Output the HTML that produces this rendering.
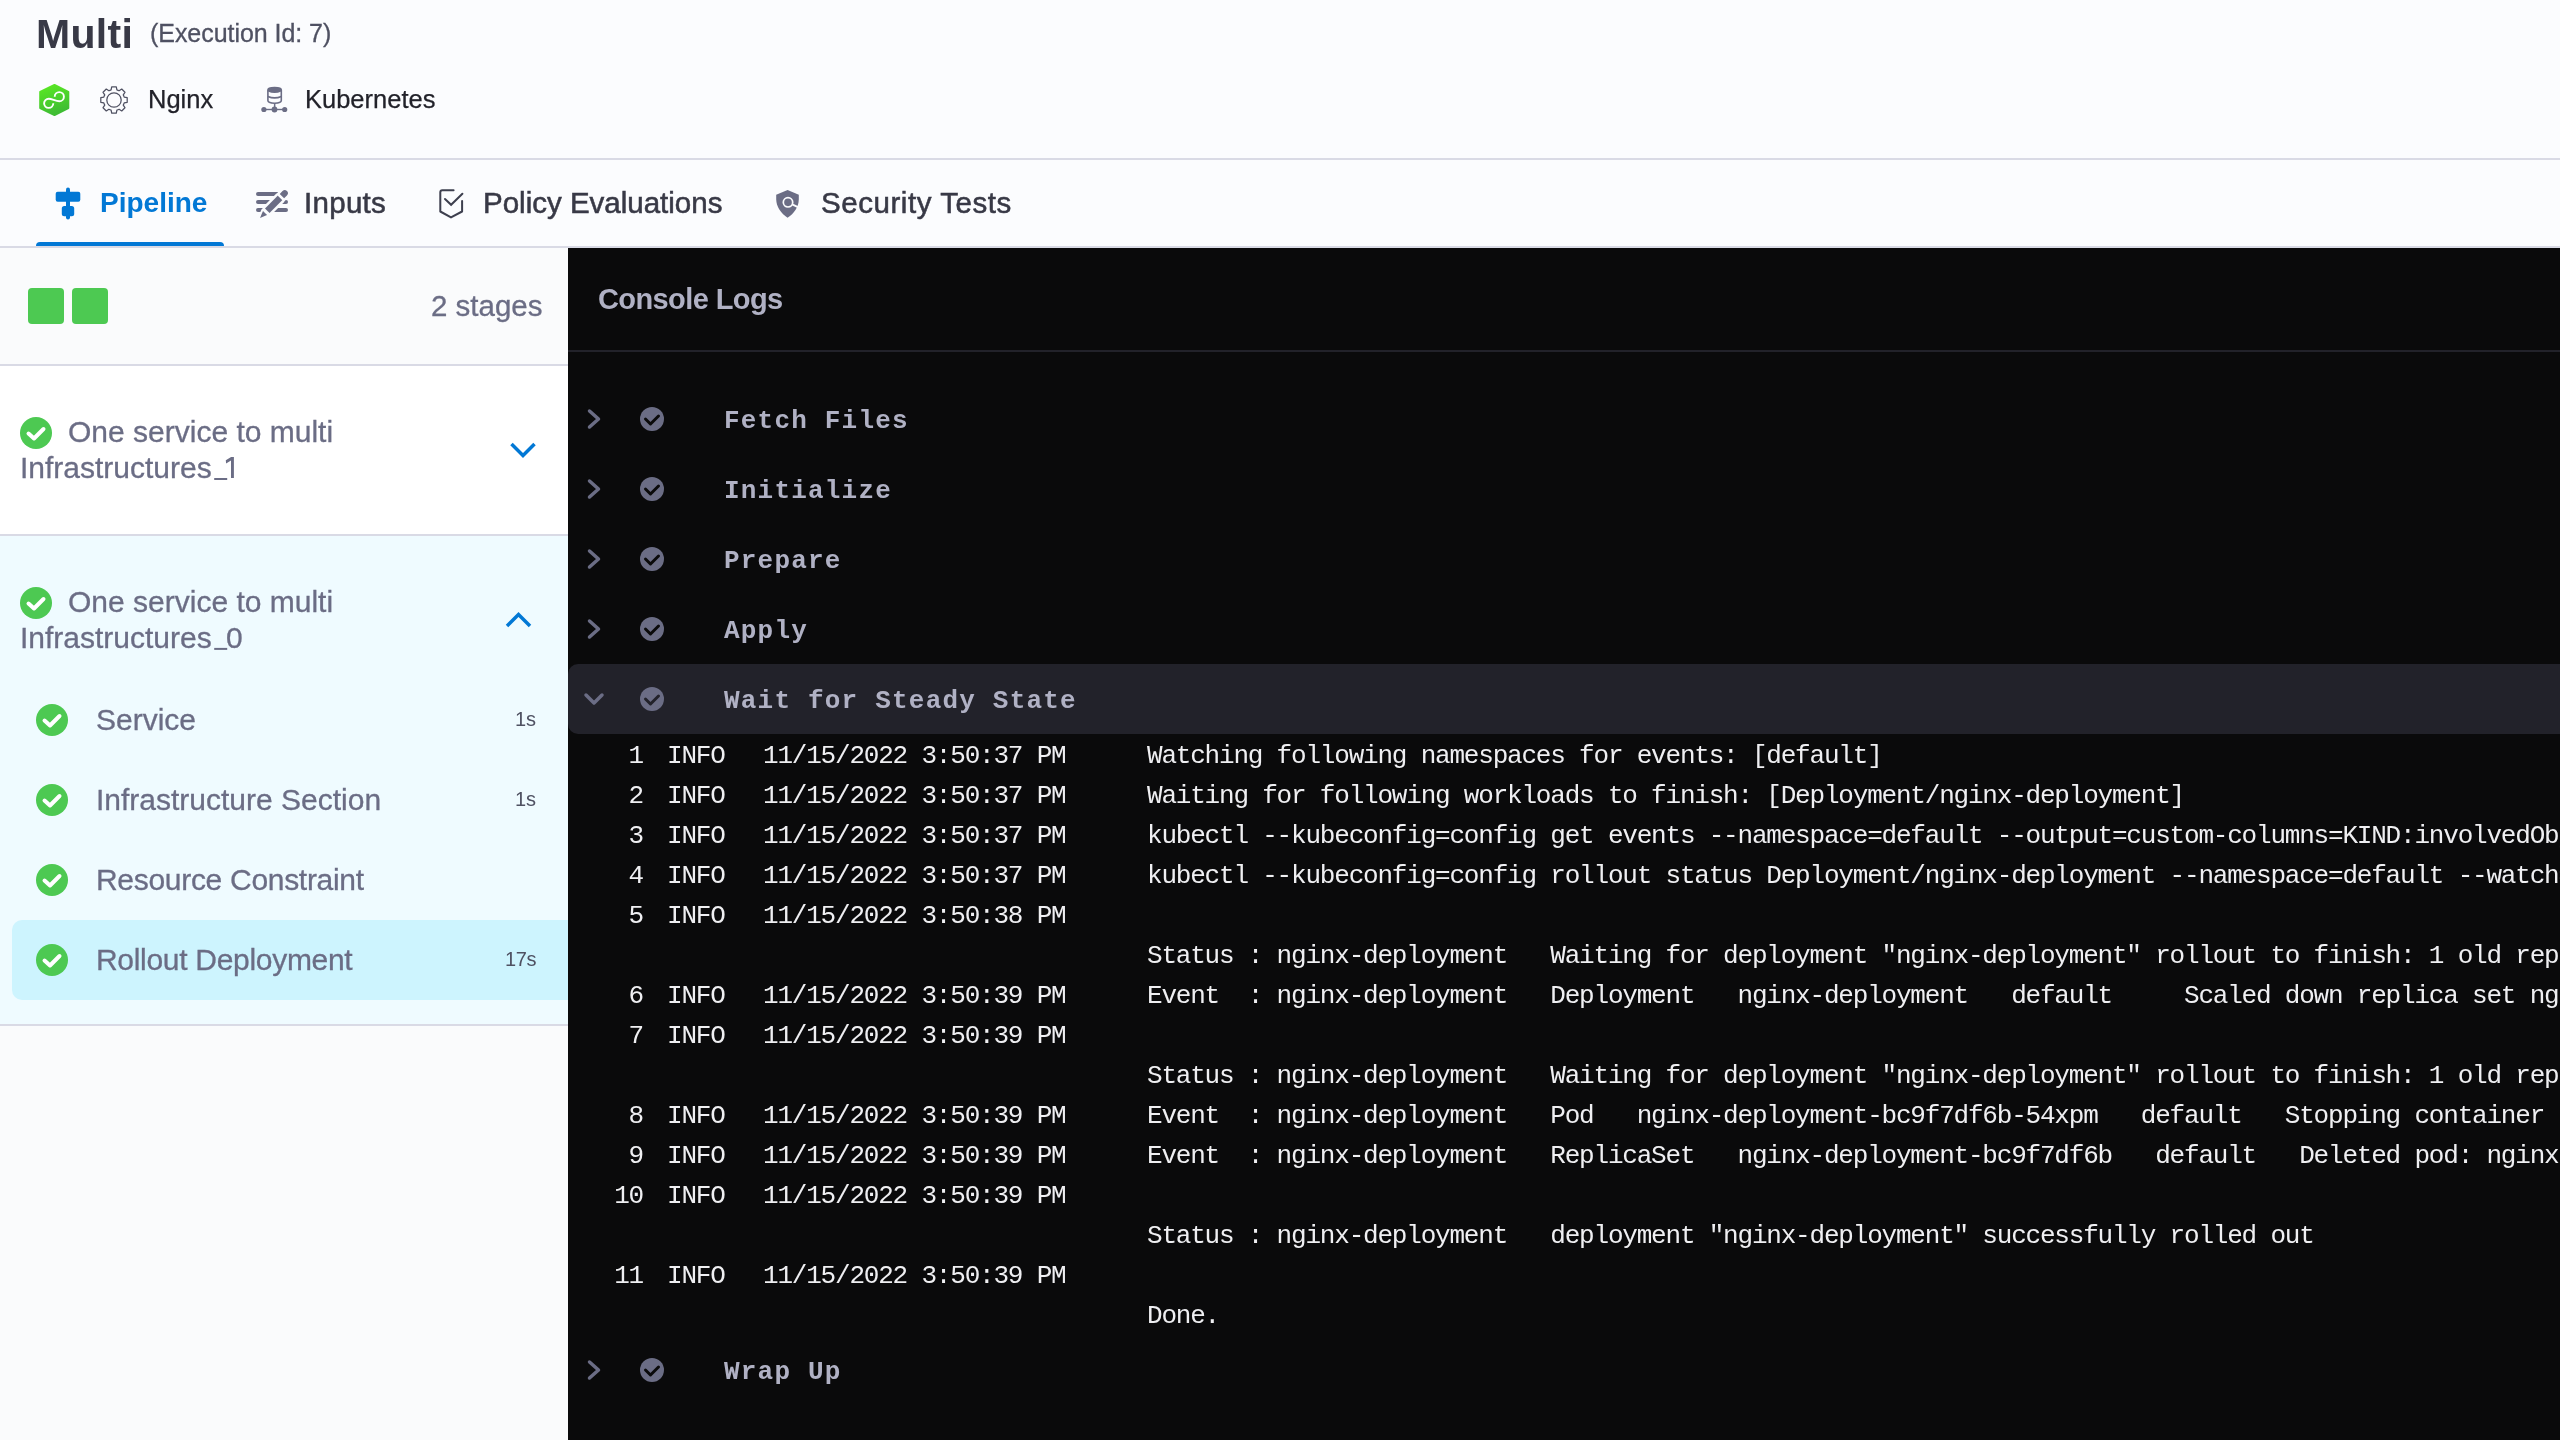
<!DOCTYPE html>
<html><head><meta charset="utf-8">
<style>
*{box-sizing:border-box;margin:0;padding:0}
html,body{width:2560px;height:1440px;overflow:hidden;background:#fafbfc;font-family:"Liberation Sans",sans-serif;-webkit-font-smoothing:antialiased}
.a{position:absolute;white-space:pre}
svg{position:absolute;overflow:visible}
#hdr{will-change:transform;position:absolute;left:0;top:0;width:2560px;height:158px;background:#fbfcfe}
#hline{position:absolute;left:0;top:158px;width:2560px;height:2px;background:#d9dae5}
#tabs{will-change:transform;position:absolute;left:0;top:160px;width:2560px;height:86px;background:#fbfcfe}
#tline{position:absolute;left:0;top:246px;width:2560px;height:2px;background:#d9dae5}
#left{will-change:transform;position:absolute;left:0;top:248px;width:568px;height:1192px;background:#fafbfc}
#console{will-change:transform;position:absolute;left:568px;top:248px;width:1992px;height:1192px;background:#0a0a0b;overflow:hidden}
.tab{font-size:29.5px;line-height:29.5px;color:#383946;-webkit-text-stroke:0.55px #383946}
.sg{font-size:30px;line-height:30px;color:#6b6d85;-webkit-text-stroke:0.3px #6b6d85}
.dur{font-size:20px;line-height:20px;color:#4f5162}
.st{position:absolute;left:156px;font-family:"Liberation Mono",monospace;font-weight:bold;font-size:26px;line-height:26px;letter-spacing:1.2px;color:#b0b1c4;white-space:pre}
.lr{position:absolute;left:0;width:1992px;height:26px;font-family:"Liberation Mono",monospace;font-size:26px;line-height:26px;letter-spacing:-1.2px;color:#efeff2;white-space:pre}
.lr span{position:absolute;top:0}
.ln{right:1917px;text-align:right}
.lv{left:99px}
.ts{left:195px}
.msg{left:579px}
</style></head><body>
<div id="hdr">
  <div class="a" id="t_multi" style="left:36px;top:13.6px;font-size:41px;line-height:41px;font-weight:bold;letter-spacing:0.3px;color:#383946">Multi</div>
  <div class="a" id="t_exec" style="left:150px;top:21px;font-size:25px;line-height:25px;letter-spacing:-0.05px;color:#4f5162;-webkit-text-stroke:0.3px #4f5162">(Execution Id: 7)</div>
  <svg id="i_cd" style="left:39px;top:84px" width="30" height="32" viewBox="0 0 30 32">
    <defs><linearGradient id="gcd" x1="0" y1="0" x2="0.3" y2="1"><stop offset="0" stop-color="#5beb22"/><stop offset="1" stop-color="#3fbd34"/></linearGradient></defs>
    <path d="M15.5 1 L29.3 8 V24 L15.5 31 L1.2 24 V8 Z" fill="url(#gcd)" stroke="url(#gcd)" stroke-width="2" stroke-linejoin="round"/>
    <path d="M14.3 19.3 A4.6 4.6 0 1 1 9.7 14.7 C13 14.7 16.5 17.3 20.3 17.3 A4.6 4.6 0 1 0 15.7 12.7" fill="none" stroke="#fff" stroke-width="1.9" stroke-linecap="butt"/>
  </svg>
  <svg id="i_gear" style="left:99px;top:85px" width="30" height="30" viewBox="0 0 30 30">
    <path d="M12.10 4.80 L12.70 1.80 L17.30 1.80 L17.90 4.80 A10.6 10.6 0 0 1 20.16 5.74 L22.71 4.04 L25.96 7.29 L24.26 9.84 A10.6 10.6 0 0 1 25.20 12.10 L28.20 12.70 L28.20 17.30 L25.20 17.90 A10.6 10.6 0 0 1 24.26 20.16 L25.96 22.71 L22.71 25.96 L20.16 24.26 A10.6 10.6 0 0 1 17.90 25.20 L17.30 28.20 L12.70 28.20 L12.10 25.20 A10.6 10.6 0 0 1 9.84 24.26 L7.29 25.96 L4.04 22.71 L5.74 20.16 A10.6 10.6 0 0 1 4.80 17.90 L1.80 17.30 L1.80 12.70 L4.80 12.10 A10.6 10.6 0 0 1 5.74 9.84 L4.04 7.29 L7.29 4.04 L9.84 5.74 A10.6 10.6 0 0 1 12.10 4.80 Z" fill="none" stroke="#4f5162" stroke-width="1.25" stroke-linejoin="round"/>
    <circle cx="15" cy="15" r="7.2" fill="none" stroke="#4f5162" stroke-width="1.25"/>
  </svg>
  <div class="a" id="t_nginx" style="left:148px;top:86.5px;font-size:25.5px;line-height:25.5px;color:#22222a;-webkit-text-stroke:0.25px #22222a">Nginx</div>
  <svg id="i_infra" style="left:260px;top:87px" width="29" height="27" viewBox="0 0 29 27">
    <path d="M7.9 3 Q7.9 0.6 14.6 0.6 Q21.3 0.6 21.3 3 V13.6 Q21.3 16.2 14.6 16.2 Q7.9 16.2 7.9 13.6 Z" fill="none" stroke="#6b6d85" stroke-width="1.6"/>
    <path d="M7.9 3 Q7.9 0.6 14.6 0.6 Q21.3 0.6 21.3 3 V4.6 Q14.6 7.6 7.9 4.6 Z" fill="#6b6d85"/>
    <path d="M7.9 9.4 Q14.6 12.4 21.3 9.4" fill="none" stroke="#6b6d85" stroke-width="1.6"/>
    <rect x="13.9" y="16" width="1.5" height="6" fill="#6b6d85"/>
    <rect x="3.9" y="21.8" width="20.8" height="1.4" fill="#6b6d85"/>
    <circle cx="3.9" cy="22.5" r="2.6" fill="#6b6d85"/><circle cx="14.5" cy="22.5" r="2.9" fill="#6b6d85"/><circle cx="24.7" cy="22.5" r="2.6" fill="#6b6d85"/>
  </svg>
  <div class="a" id="t_kube" style="left:305px;top:86.5px;font-size:25.5px;line-height:25.5px;color:#22222a;-webkit-text-stroke:0.25px #22222a">Kubernetes</div>
</div>
<div id="hline"></div>
<div id="tabs">
  <svg id="i_pipe" style="left:55px;top:27px" width="26" height="33" viewBox="0 0 26 33">
    <rect x="11" y="0.5" width="4" height="32" rx="2" fill="#0278d5"/>
    <rect x="0.7" y="4.8" width="24.6" height="10" rx="2" fill="#0278d5"/>
    <rect x="6.8" y="19" width="12.4" height="10.2" rx="2.5" fill="#0278d5"/>
  </svg>
  <div class="a" id="t_pipe" style="left:100px;top:29px;font-size:28px;line-height:28px;font-weight:bold;color:#0278d5">Pipeline</div>
  <svg id="i_inputs" style="left:250px;top:24px" width="44" height="40" viewBox="250 184 44 40">
    <path d="M258 194 H286 M258 202 H286 M258 210 H286" stroke="#6b6d85" stroke-width="4" stroke-linecap="round" fill="none"/>
    <g transform="translate(260 218) rotate(-45)" fill="#6b6d85" stroke="#fbfcfe" stroke-width="5" paint-order="stroke" stroke-linejoin="round">
      <path d="M0 0 L7.1 -2.9 L7.1 2.9 Z" stroke-width="4"/>
      <rect x="10.3" y="-3.2" width="18.2" height="6.4"/>
      <path d="M31 -3.1 H35 A3.1 3.1 0 0 1 35 3.1 H31 Z"/>
    </g>
  </svg>
  <div class="a tab" id="t_inputs" style="left:304px;top:27.7px;letter-spacing:0.3px">Inputs</div>
  <svg id="i_policy" style="left:430px;top:24px" width="40" height="40" viewBox="430 184 40 40">
    <path d="M453.6 190.3 H442.3 Q440.3 190.3 440.3 192.3 V211.5 L451 217.4 L462.1 211.5 V200.9" fill="none" stroke="#3d3f4e" stroke-width="2" stroke-linejoin="round" stroke-linecap="round"/>
    <path d="M445 199 L451.1 204.8 L462.4 193.7" fill="none" stroke="#3d3f4e" stroke-width="2" stroke-linecap="round"/>
  </svg>
  <div class="a tab" id="t_policy" style="left:483px;top:27.7px;letter-spacing:0px">Policy Evaluations</div>
  <svg id="i_sec" style="left:768px;top:24px" width="40" height="40" viewBox="768 184 40 40">
    <path d="M787.6 190 L798.8 194.7 V199 C798.8 207 794 213.5 787.6 217.75 C781.2 213.5 776.2 207 776.2 199 V194.7 Z" fill="#6b6d85"/>
    <circle cx="788" cy="202.3" r="4.7" fill="none" stroke="#fbfcfe" stroke-width="1.7"/>
    <path d="M792.2 204.4 L800 208.2" stroke="#fbfcfe" stroke-width="1.9"/>
  </svg>
  <div class="a tab" id="t_sec" style="left:821px;top:27.7px;letter-spacing:0.55px">Security Tests</div>
  <div class="a" style="left:36px;top:82px;width:188px;height:5px;background:#0278d5;border-radius:4px 4px 0 0"></div>
</div>
<div id="tline"></div>
<div id="left">
  <div class="a" style="left:28px;top:40px;width:36px;height:36px;background:#4dc952;border-radius:4px"></div>
  <div class="a" style="left:72px;top:40px;width:36px;height:36px;background:#4dc952;border-radius:4px"></div>
  <div class="a sg" id="t_stages" style="left:431px;top:43px;font-size:29.5px;line-height:29.5px">2 stages</div>
  <div class="a" style="left:0;top:116px;width:568px;height:2px;background:#d9dae5"></div>
  <div class="a" style="left:0;top:118px;width:568px;height:168px;background:#ffffff"></div>
  <div class="a" style="left:0;top:286px;width:568px;height:2px;background:#d9dae5"></div>
  <div class="a" style="left:0;top:288px;width:568px;height:488px;background:#effbff"></div>
  <div class="a" style="left:0;top:776px;width:568px;height:2px;background:#d9dae5"></div>
  <div class="a" style="left:12px;top:672px;width:556px;height:80px;background:#cdf4fe;border-radius:10px 0 0 10px"></div>
  <svg style="left:20px;top:169px" width="32" height="32" viewBox="0 0 32 32"><circle cx="16" cy="16" r="16" fill="#4dc952"/><path d="M8.5 16.5 L14 21.5 L23.5 12" fill="none" stroke="#fff" stroke-width="4" stroke-linecap="round" stroke-linejoin="round"/></svg>
  <svg style="left:20px;top:339px" width="32" height="32" viewBox="0 0 32 32"><circle cx="16" cy="16" r="16" fill="#4dc952"/><path d="M8.5 16.5 L14 21.5 L23.5 12" fill="none" stroke="#fff" stroke-width="4" stroke-linecap="round" stroke-linejoin="round"/></svg>
  <svg style="left:36px;top:456px" width="32" height="32" viewBox="0 0 32 32"><circle cx="16" cy="16" r="16" fill="#4dc952"/><path d="M8.5 16.5 L14 21.5 L23.5 12" fill="none" stroke="#fff" stroke-width="4" stroke-linecap="round" stroke-linejoin="round"/></svg>
  <svg style="left:36px;top:536px" width="32" height="32" viewBox="0 0 32 32"><circle cx="16" cy="16" r="16" fill="#4dc952"/><path d="M8.5 16.5 L14 21.5 L23.5 12" fill="none" stroke="#fff" stroke-width="4" stroke-linecap="round" stroke-linejoin="round"/></svg>
  <svg style="left:36px;top:616px" width="32" height="32" viewBox="0 0 32 32"><circle cx="16" cy="16" r="16" fill="#4dc952"/><path d="M8.5 16.5 L14 21.5 L23.5 12" fill="none" stroke="#fff" stroke-width="4" stroke-linecap="round" stroke-linejoin="round"/></svg>
  <svg style="left:36px;top:696px" width="32" height="32" viewBox="0 0 32 32"><circle cx="16" cy="16" r="16" fill="#4dc952"/><path d="M8.5 16.5 L14 21.5 L23.5 12" fill="none" stroke="#fff" stroke-width="4" stroke-linecap="round" stroke-linejoin="round"/></svg>
  <div class="a sg" id="t_s1" style="left:68px;top:168.8px">One service to multi</div>
  <div class="a sg" id="t_s1b" style="left:20px;top:204.8px">Infrastructures</div>
  <svg style="left:0;top:0" width="568" height="1192" viewBox="0 248 568 1192"><rect x="214.2" y="478" width="13" height="2" fill="#6b6d85"/><path d="M225.8 460.3 L231.1 457.1 L233.9 457.1 L233.9 478 L231 478 L231 460.6 L226.1 463.4 Z" fill="#6b6d85"/><rect x="214.2" y="647.9" width="13" height="2" fill="#6b6d85"/></svg>
  <svg style="left:0;top:0" width="568" height="1192"><path d="M511.5 196 L523 207.5 L534.5 196" fill="none" stroke="#0278d5" stroke-width="3.5"/><path d="M507 378 L518.5 366.5 L530 378" fill="none" stroke="#0278d5" stroke-width="3.5"/></svg>
  <div class="a sg" id="t_s2" style="left:68px;top:338.8px">One service to multi</div>
  <div class="a sg" id="t_s2b" style="left:20px;top:374.8px">Infrastructures</div>
  <div class="a sg" id="t_zero" style="left:226px;top:374.8px">0</div>
  <div class="a sg" id="t_svc" style="left:96px;top:456.6px">Service</div>
  <div class="a dur" style="left:515px;top:460.9px">1s</div>
  <div class="a sg" id="t_inf" style="left:96px;top:536.6px">Infrastructure Section</div>
  <div class="a dur" style="left:515px;top:540.9px">1s</div>
  <div class="a sg" id="t_res" style="left:96px;top:616.6px;letter-spacing:-0.3px">Resource Constraint</div>
  <div class="a sg" id="t_roll" style="left:96px;top:696.6px;letter-spacing:-0.3px">Rollout Deployment</div>
  <div class="a dur" style="left:505px;top:700.9px;letter-spacing:-0.4px">17s</div>
</div>
<div id="console">
  <div class="a" id="t_console" style="left:30px;top:36.5px;font-size:29px;line-height:29px;font-weight:bold;letter-spacing:-0.6px;color:#b0b1c4">Console Logs</div>
  <div class="a" style="left:0;top:102px;width:1992px;height:2px;background:#22222a"></div>
  <div class="a" style="left:0;top:416px;width:2100px;height:70px;background:#22222a;border-radius:10px 0 0 10px"></div>
  <svg style="left:0;top:0" width="200" height="1192"><path d="M21.5 163 L30.5 171 L21.5 179" fill="none" stroke="#6b6d85" stroke-width="3.5" stroke-linecap="round" stroke-linejoin="round"/><circle cx="84" cy="171" r="12" fill="#6b6d85"/><path d="M77.5 171 L82.5 176 L90.5 168" fill="none" stroke="#0a0a0b" stroke-width="3" stroke-linecap="round" stroke-linejoin="round"/></svg>
  <div class="st" style="top:160.1px">Fetch Files</div>
  <svg style="left:0;top:0" width="200" height="1192"><path d="M21.5 233 L30.5 241 L21.5 249" fill="none" stroke="#6b6d85" stroke-width="3.5" stroke-linecap="round" stroke-linejoin="round"/><circle cx="84" cy="241" r="12" fill="#6b6d85"/><path d="M77.5 241 L82.5 246 L90.5 238" fill="none" stroke="#0a0a0b" stroke-width="3" stroke-linecap="round" stroke-linejoin="round"/></svg>
  <div class="st" style="top:230.1px">Initialize</div>
  <svg style="left:0;top:0" width="200" height="1192"><path d="M21.5 303 L30.5 311 L21.5 319" fill="none" stroke="#6b6d85" stroke-width="3.5" stroke-linecap="round" stroke-linejoin="round"/><circle cx="84" cy="311" r="12" fill="#6b6d85"/><path d="M77.5 311 L82.5 316 L90.5 308" fill="none" stroke="#0a0a0b" stroke-width="3" stroke-linecap="round" stroke-linejoin="round"/></svg>
  <div class="st" style="top:300.1px">Prepare</div>
  <svg style="left:0;top:0" width="200" height="1192"><path d="M21.5 373 L30.5 381 L21.5 389" fill="none" stroke="#6b6d85" stroke-width="3.5" stroke-linecap="round" stroke-linejoin="round"/><circle cx="84" cy="381" r="12" fill="#6b6d85"/><path d="M77.5 381 L82.5 386 L90.5 378" fill="none" stroke="#0a0a0b" stroke-width="3" stroke-linecap="round" stroke-linejoin="round"/></svg>
  <div class="st" style="top:370.1px">Apply</div>
  <svg style="left:0;top:0" width="200" height="1192"><path d="M18 447 L26 455 L34 447" fill="none" stroke="#6b6d85" stroke-width="3.5" stroke-linecap="round" stroke-linejoin="round"/><circle cx="84" cy="451" r="12" fill="#6b6d85"/><path d="M77.5 451 L82.5 456 L90.5 448" fill="none" stroke="#22222a" stroke-width="3" stroke-linecap="round" stroke-linejoin="round"/></svg>
  <div class="st" style="top:440.1px">Wait for Steady State</div>
  <svg style="left:0;top:0" width="200" height="1192"><path d="M21.5 1114 L30.5 1122 L21.5 1130" fill="none" stroke="#6b6d85" stroke-width="3.5" stroke-linecap="round" stroke-linejoin="round"/><circle cx="84" cy="1122" r="12" fill="#6b6d85"/><path d="M77.5 1122 L82.5 1127 L90.5 1119" fill="none" stroke="#0a0a0b" stroke-width="3" stroke-linecap="round" stroke-linejoin="round"/></svg>
  <div class="st" style="top:1111.1px">Wrap Up</div>
  <div class="lr" style="top:494.6px"><span class="ln">1</span><span class="lv">INFO</span><span class="ts">11/15/2022 3:50:37 PM</span><span class="msg">Watching following namespaces for events: [default]</span></div>
  <div class="lr" style="top:534.6px"><span class="ln">2</span><span class="lv">INFO</span><span class="ts">11/15/2022 3:50:37 PM</span><span class="msg">Waiting for following workloads to finish: [Deployment/nginx-deployment]</span></div>
  <div class="lr" style="top:574.6px"><span class="ln">3</span><span class="lv">INFO</span><span class="ts">11/15/2022 3:50:37 PM</span><span class="msg">kubectl --kubeconfig=config get events --namespace=default --output=custom-columns=KIND:involvedObject.kind,NAME:.involvedObject.name</span></div>
  <div class="lr" style="top:614.6px"><span class="ln">4</span><span class="lv">INFO</span><span class="ts">11/15/2022 3:50:37 PM</span><span class="msg">kubectl --kubeconfig=config rollout status Deployment/nginx-deployment --namespace=default --watch=true</span></div>
  <div class="lr" style="top:654.6px"><span class="ln">5</span><span class="lv">INFO</span><span class="ts">11/15/2022 3:50:38 PM</span></div>
  <div class="lr" style="top:694.6px"><span class="msg">Status : nginx-deployment   Waiting for deployment &quot;nginx-deployment&quot; rollout to finish: 1 old replicas are pending termination...</span></div>
  <div class="lr" style="top:734.6px"><span class="ln">6</span><span class="lv">INFO</span><span class="ts">11/15/2022 3:50:39 PM</span><span class="msg">Event  : nginx-deployment   Deployment   nginx-deployment   default     Scaled down replica set nginx-deployment-bc9f7df6b to 0</span></div>
  <div class="lr" style="top:774.6px"><span class="ln">7</span><span class="lv">INFO</span><span class="ts">11/15/2022 3:50:39 PM</span></div>
  <div class="lr" style="top:814.6px"><span class="msg">Status : nginx-deployment   Waiting for deployment &quot;nginx-deployment&quot; rollout to finish: 1 old replicas are pending termination...</span></div>
  <div class="lr" style="top:854.6px"><span class="ln">8</span><span class="lv">INFO</span><span class="ts">11/15/2022 3:50:39 PM</span><span class="msg">Event  : nginx-deployment   Pod   nginx-deployment-bc9f7df6b-54xpm   default   Stopping container nginx</span></div>
  <div class="lr" style="top:894.6px"><span class="ln">9</span><span class="lv">INFO</span><span class="ts">11/15/2022 3:50:39 PM</span><span class="msg">Event  : nginx-deployment   ReplicaSet   nginx-deployment-bc9f7df6b   default   Deleted pod: nginx-deployment-bc9f7df6b-54xpm</span></div>
  <div class="lr" style="top:934.6px"><span class="ln">10</span><span class="lv">INFO</span><span class="ts">11/15/2022 3:50:39 PM</span></div>
  <div class="lr" style="top:974.6px"><span class="msg">Status : nginx-deployment   deployment &quot;nginx-deployment&quot; successfully rolled out</span></div>
  <div class="lr" style="top:1014.6px"><span class="ln">11</span><span class="lv">INFO</span><span class="ts">11/15/2022 3:50:39 PM</span></div>
  <div class="lr" style="top:1054.6px"><span class="msg">Done.</span></div>
</div>
</body></html>
